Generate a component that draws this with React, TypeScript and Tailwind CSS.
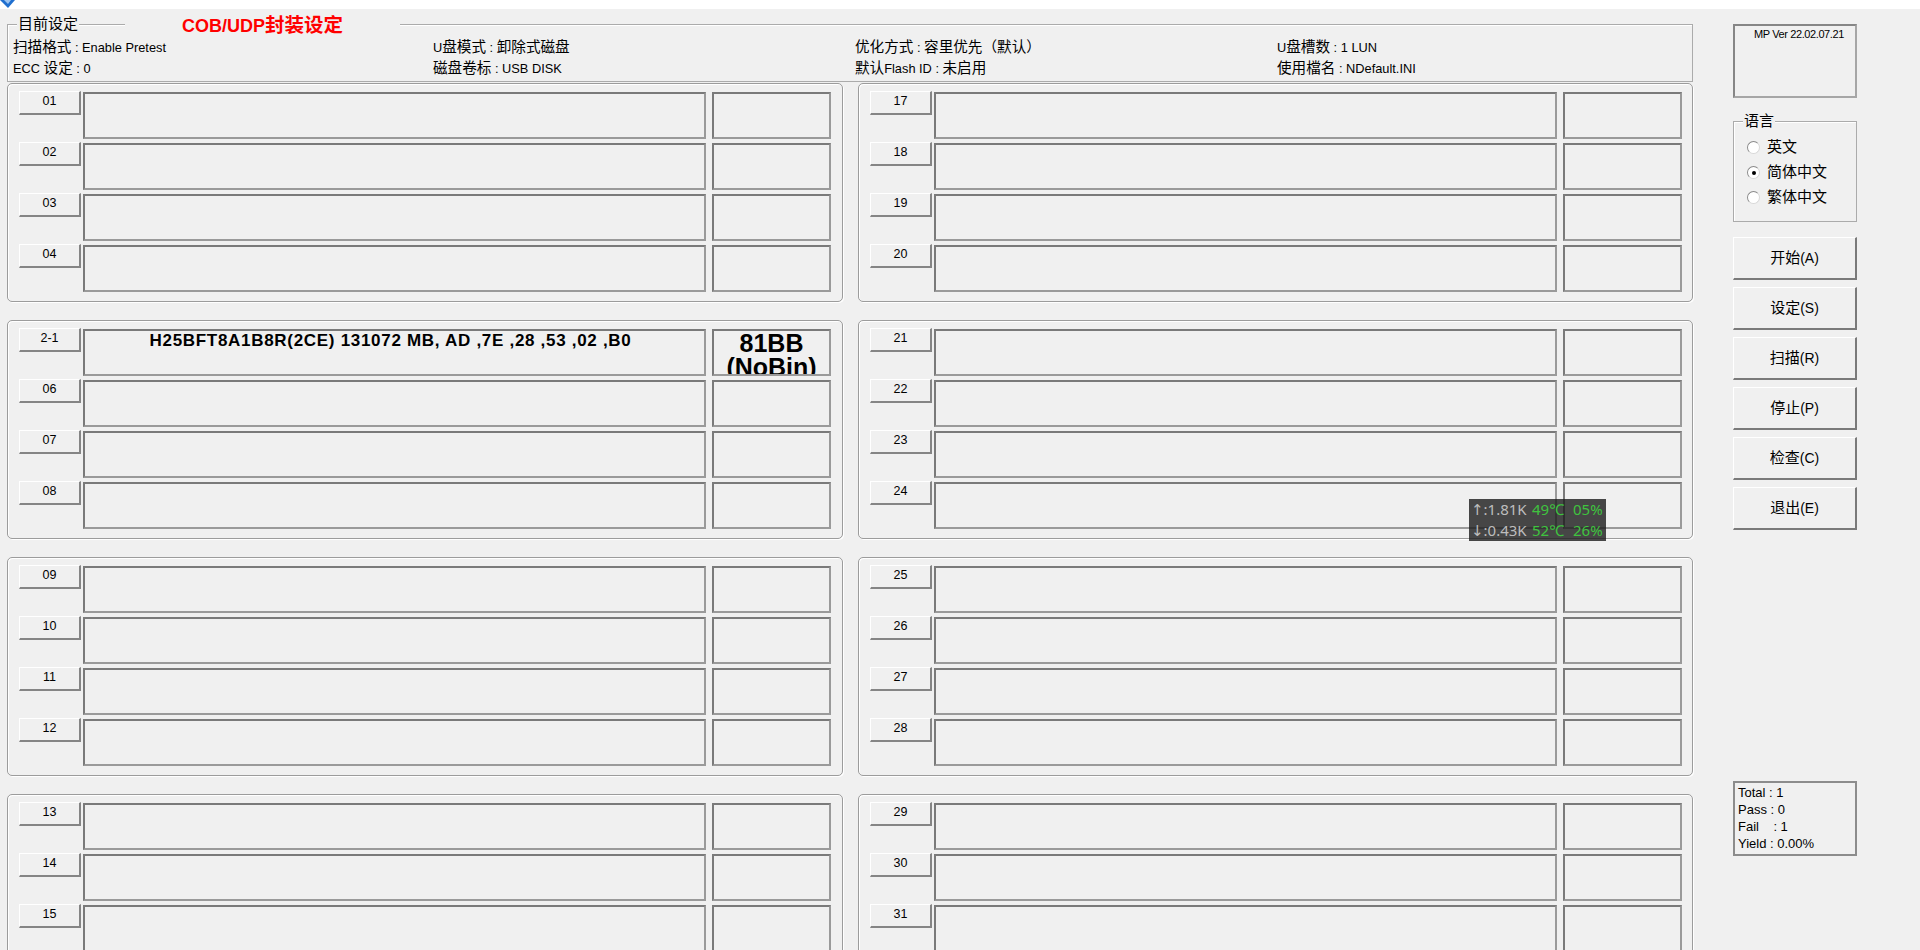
import React from "react";

const CJK_RE = /([\u2E80-\u9FFF\uF900-\uFAFF\uFF00-\uFFEF]+)/;

// CJK glyphs in the original UI font are wider than the latin ones, so size runs separately
const Mixed = ({ text, big }: { text: string; big: string }) => {
  const parts = text.split(CJK_RE);
  return (
    <>
      {parts.map((p, i) =>
        i % 2 ? (
          <span key={i} className={big}>
            {p}
          </span>
        ) : (
          <React.Fragment key={i}>{p}</React.Fragment>
        )
      )}
    </>
  );
};

const info = [
  ["扫描格式 : Enable Pretest", "ECC 设定 : 0"],
  ["U盘模式 : 卸除式磁盘", "磁盘卷标 : USB DISK"],
  ["优化方式 : 容里优先（默认）", "默认Flash ID : 未启用"],
  ["U盘槽数 : 1 LUN", "使用檔名 : NDefault.INI"],
];

// last row of panels runs past the bottom of the window, only 3 slots show
const panels = [
  ["01", "02", "03", "04"],
  ["17", "18", "19", "20"],
  ["2-1", "06", "07", "08"],
  ["21", "22", "23", "24"],
  ["09", "10", "11", "12"],
  ["25", "26", "27", "28"],
  ["13", "14", "15"],
  ["29", "30", "31"],
];

const actions = ["开始(A)", "设定(S)", "扫描(R)", "停止(P)", "检查(C)", "退出(E)"];

const field =
  "h-[47px] mt-[1px] overflow-hidden border-2 border-t-[#7a7a7a] border-l-[#7a7a7a] border-r-[#9a9a9a] border-b-[#9a9a9a]";

const SlotRow = ({ id }: { id: string }) => {
  const active = id === "2-1";
  return (
    <div className="flex items-start">
      <div className="w-[62px] h-[24px] shrink-0 border-t border-l border-t-white border-l-white border-r-2 border-b-2 border-r-[#858585] border-b-[#858585] text-center text-[12.5px] leading-[19px]">
        {id}
      </div>
      <div className={`${field} ml-[2px] w-[623px] shrink-0`}>
        {active && (
          <div className="text-center font-bold text-[17px] tracking-[0.7px] leading-[20px] pr-[8px]">
            H25BFT8A1B8R(2CE) 131072 MB, AD ,7E ,28 ,53 ,02 ,B0
          </div>
        )}
      </div>
      <div className={`${field} ml-[6px] w-[119px] shrink-0`}>
        {active && (
          <div className="text-center font-bold text-[25px] leading-[24px]">
            <div>81BB</div>
            <div>(NoBin)</div>
          </div>
        )}
      </div>
    </div>
  );
};

const Panel = ({ ids }: { ids: string[] }) => (
  <div className="h-[219px] rounded-[5px] border border-[#9c9c9c] shadow-[inset_1px_1px_0_#ffffff,1px_1px_0_#ffffff] pt-[7px] pl-[11px] flex flex-col gap-[3px]">
    {ids.map((id) => (
      <SlotRow key={id} id={id} />
    ))}
  </div>
);

const Radio = ({ label, checked }: { label: string; checked?: boolean }) => (
  <div className="flex items-center h-[25px]">
    <span className="w-[13px] h-[13px] rounded-full bg-white border border-t-[#8a8a8a] border-l-[#8a8a8a] border-r-[#d8d8d8] border-b-[#d8d8d8] flex items-center justify-center">
      {checked && <span className="w-[4px] h-[4px] rounded-full bg-black" />}
    </span>
    <span className="ml-[7px] text-[15px]">{label}</span>
  </div>
);

export default function App() {
  return (
    <div className="relative w-[1920px] h-[950px] overflow-hidden bg-[#f0f0f0] text-black [font-family:'Liberation_Sans','Noto_Sans_CJK_SC',sans-serif]">
      {/* cut-off title bar */}
      <div className="h-[9px] bg-white">
        <svg width="16" height="9" viewBox="0 0 16 9">
          <path d="M0 0 H15 L8 8 Z" fill="#1f6fcf" />
          <path d="M4 0 H11 L8 4 Z" fill="#9cc3ef" />
        </svg>
      </div>

      <div className="flex">
        {/* left area */}
        <div className="ml-[7px] w-[1686px]">
          <div className="relative mt-[15px] h-[58px] border border-[#ababab] shadow-[inset_1px_1px_0_#ffffff]">
            <div className="absolute left-[9px] top-[-11px] px-[1px] bg-[#f0f0f0] text-[15px] leading-[20px]">
              目前设定
            </div>
            <div className="absolute left-[117px] top-[-11px] w-[275px] h-[22px] bg-[#f0f0f0] text-center font-bold text-[#ff0000] text-[18px] leading-[22px]">
              <Mixed text="COB/UDP封装设定" big="text-[19.5px]" />
            </div>
            <div className="grid grid-cols-[420px_422px_422px_1fr] pl-[5px] pt-[12px] text-[12.8px] leading-[21px]">
              {info.map((col, i) => (
                <div key={i}>
                  {col.map((line) => (
                    <div key={line} className="whitespace-pre">
                      <Mixed text={line} big="text-[14.6px]" />
                    </div>
                  ))}
                </div>
              ))}
            </div>
          </div>

          <div className="mt-[1px] grid grid-cols-[836px_835px] gap-x-[15px] gap-y-[18px]">
            {panels.map((ids) => (
              <Panel key={ids[0]} ids={ids} />
            ))}
          </div>
        </div>

        {/* right column */}
        <div className="ml-[40px] w-[124px] flex flex-col">
          <div className="mt-[15px] h-[74px] border-2 border-t-[#868686] border-l-[#868686] border-r-[#a6a6a6] border-b-[#a6a6a6] text-center text-[11px] tracking-[-0.4px] leading-[16px] pl-[8px]">
            MP Ver 22.02.07.21
          </div>

          <div className="relative mt-[23px] h-[101px] border border-[#ababab] shadow-[inset_1px_1px_0_#ffffff] pt-[13px] pl-[13px]">
            <div className="absolute left-[9px] top-[-11px] px-[1px] bg-[#f0f0f0] text-[15px] leading-[20px]">
              语言
            </div>
            <Radio label="英文" />
            <Radio label="简体中文" checked />
            <Radio label="繁体中文" />
          </div>

          <div className="mt-[15px] flex flex-col gap-[7px]">
            {actions.map((a) => (
              <div
                key={a}
                className="h-[43px] flex items-center justify-center border-t border-l border-t-white border-l-white border-r-2 border-b-2 border-r-[#7a7a7a] border-b-[#7a7a7a] text-[14px]"
              >
                <Mixed text={a} big="text-[15px]" />
              </div>
            ))}
          </div>

          <div className="mt-[251px] h-[75px] border-2 border-[#8c8c8c] pl-[3px] pt-[1px] text-[13px] leading-[17px] whitespace-pre">
            <div>Total : 1</div>
            <div>Pass : 0</div>
            <div>Fail    : 1</div>
            <div>Yield : 0.00%</div>
          </div>
        </div>
      </div>

      {/* network / temperature meter floating over the window */}
      <div className="absolute left-[1469px] top-[499px] w-[137px] h-[42px] bg-[#1c1c1c]/80 pl-[2px] text-[15px] leading-[21px] whitespace-pre [font-family:'Noto_Sans','DejaVu_Sans',sans-serif]">
        <div>
          <span className="inline-block w-[61px] text-[#bdbdbd]">↑:1.81K</span>
          <span className="inline-block w-[41px] text-[#3fc33f]">49℃</span>
          <span className="text-[#3fc33f]">05%</span>
        </div>
        <div>
          <span className="inline-block w-[61px] text-[#bdbdbd]">↓:0.43K</span>
          <span className="inline-block w-[41px] text-[#3fc33f]">52℃</span>
          <span className="text-[#3fc33f]">26%</span>
        </div>
      </div>
    </div>
  );
}
